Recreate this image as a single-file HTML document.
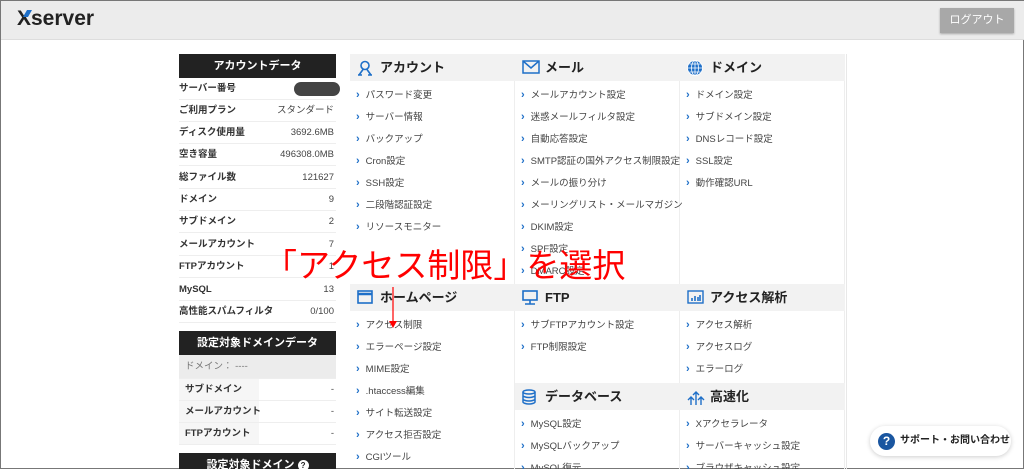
<!DOCTYPE html>
<html><head><meta charset="utf-8"><style>
*{margin:0;padding:0;box-sizing:border-box}
html,body{overflow:hidden}
body{width:1024px;height:469px;overflow:hidden;background:#fff;font-family:"Liberation Sans","Noto Sans CJK JP",sans-serif;color:#333;position:relative;border:1px solid #777;}
.hdr{position:absolute;left:0;top:0;width:1024px;height:39px;background:#ececec;border-bottom:1px solid #ddd}
.logo{position:absolute;left:16px;top:6px;font-size:21px;font-weight:bold;color:#222;letter-spacing:0}
.logo i{position:absolute;left:8px;top:3px;width:5px;height:7px;background:#1e6fc8;transform:skewX(-30deg)}
.out{position:absolute;left:939px;top:7px;width:74px;height:25px;background:#a8a8a8;color:#fff;font-size:11px;text-align:center;line-height:25px;box-shadow:0 1px 2px rgba(0,0,0,.3)}
.bh{position:absolute;left:178px;width:157px;height:24px;background:#222;color:#fff;font-size:11px;font-weight:bold;text-align:center;line-height:24px}
.r{position:absolute;left:178px;width:157px;height:22px;border-bottom:1px solid #eee;font-size:9.5px;line-height:22px}
.r b{font-weight:bold;color:#333}
.r span{position:absolute;right:2px;top:0;color:#444}
.grid{position:absolute;left:349px;top:53px;width:497px;height:420px;border-right:1px solid #e8e8e8}
.col{position:absolute;top:0;width:165px;height:420px;border-right:1px solid #eee}
.h{position:absolute;left:0;width:165px;height:27px;background:#f2f2f2;font-size:13px;font-weight:bold;line-height:27px;padding-left:30px;color:#222}
.h svg{position:absolute;left:7px;top:6px}
.it{position:absolute;left:6px;font-size:9.5px;color:#444;white-space:nowrap}
.it:before{content:"›";color:#1e6fc8;font-weight:bold;margin-right:6px;font-size:11px}
.ann{position:absolute;left:263px;top:238px;font-size:33px;color:#f00;white-space:nowrap;letter-spacing:0}
.sup{position:absolute;left:869px;top:425px;width:141px;height:30px;background:#fff;border-radius:15px;box-shadow:0 1px 5px rgba(0,0,0,.2);font-size:10px;font-weight:bold;line-height:30px;padding-left:30px;color:#222}
.sup i{position:absolute;left:8px;top:7px;width:17px;height:17px;border-radius:50%;background:#1a56a0;color:#fff;font-style:normal;text-align:center;line-height:17px;font-size:12px}
</style></head><body>
<div class="hdr"><div class="logo"><i></i>Xserver</div><div class="out">ログアウト</div></div>

<div class="bh" style="top:53px">アカウントデータ</div>
<div class="r" style="top:77px"><b>サーバー番号</b><span style="right:-4px;top:4px;width:46px;height:14px;border-radius:7px;background:#444"></span></div>
<div class="r" style="top:99px"><b>ご利用プラン</b><span>スタンダード</span></div>
<div class="r" style="top:121px"><b>ディスク使用量</b><span>3692.6MB</span></div>
<div class="r" style="top:143px"><b>空き容量</b><span>496308.0MB</span></div>
<div class="r" style="top:166px"><b>総ファイル数</b><span>121627</span></div>
<div class="r" style="top:188px"><b>ドメイン</b><span>9</span></div>
<div class="r" style="top:210px"><b>サブドメイン</b><span>2</span></div>
<div class="r" style="top:233px"><b>メールアカウント</b><span>7</span></div>
<div class="r" style="top:255px"><b>FTPアカウント</b><span>1</span></div>
<div class="r" style="top:278px"><b>MySQL</b><span>13</span></div>
<div class="r" style="top:300px"><b>高性能スパムフィルタ</b><span>0/100</span></div>
<div class="bh" style="top:330px">設定対象ドメインデータ</div>
<div class="r" style="top:354px;background:#ececec;color:#777;padding-left:6px;height:24px;line-height:24px">ドメイン： ----</div>
<div class="r" style="top:378px;padding-left:6px;background:linear-gradient(90deg,#f6f6f6 80px,#fff 80px)"><b>サブドメイン</b><span>-</span></div>
<div class="r" style="top:400px;padding-left:6px;background:linear-gradient(90deg,#f6f6f6 80px,#fff 80px)"><b>メールアカウント</b><span>-</span></div>
<div class="r" style="top:422px;padding-left:6px;background:linear-gradient(90deg,#f6f6f6 80px,#fff 80px)"><b>FTPアカウント</b><span>-</span></div>
<div class="bh" style="top:452px">設定対象ドメイン <span style="display:inline-block;width:11px;height:11px;border-radius:50%;background:#fff;color:#222;font-size:8px;line-height:11px">?</span></div>

<div class="grid">
<div class="col" style="left:0">
<div class="h" style="top:0"><svg width="16" height="16" viewBox="0 0 16 16" fill="none" stroke="#1e6fc8" stroke-width="1.6"><circle cx="8" cy="5.5" r="4"/><path d="M6 9.5L2 15M10 9.5L14 15M1 15h4M11 15h4"/></svg>アカウント</div>
<div class="it" style="top:33px">パスワード変更</div>
<div class="it" style="top:55px">サーバー情報</div>
<div class="it" style="top:77px">バックアップ</div>
<div class="it" style="top:99px">Cron設定</div>
<div class="it" style="top:121px">SSH設定</div>
<div class="it" style="top:143px">二段階認証設定</div>
<div class="it" style="top:165px">リソースモニター</div>
<div class="h" style="top:230px"><svg width="16" height="14" viewBox="0 0 16 14" fill="none" stroke="#1e6fc8" stroke-width="1.6"><rect x="1" y="1" width="14" height="12"/><path d="M1 4h14" stroke-width="2.5"/></svg>ホームページ</div>
<div class="it" style="top:263px">アクセス制限</div>
<div class="it" style="top:285px">エラーページ設定</div>
<div class="it" style="top:307px">MIME設定</div>
<div class="it" style="top:329px">.htaccess編集</div>
<div class="it" style="top:351px">サイト転送設定</div>
<div class="it" style="top:373px">アクセス拒否設定</div>
<div class="it" style="top:395px">CGIツール</div>
</div>
<div class="col" style="left:165px">
<div class="h" style="top:0"><svg width="18" height="14" viewBox="0 0 18 14" fill="none" stroke="#1e6fc8" stroke-width="1.5"><rect x="1" y="1" width="16" height="12"/><path d="M1 1l8 7 8-7"/></svg>メール</div>
<div class="it" style="top:33px">メールアカウント設定</div>
<div class="it" style="top:55px">迷惑メールフィルタ設定</div>
<div class="it" style="top:77px">自動応答設定</div>
<div class="it" style="top:99px">SMTP認証の国外アクセス制限設定</div>
<div class="it" style="top:121px">メールの振り分け</div>
<div class="it" style="top:143px">メーリングリスト・メールマガジン</div>
<div class="it" style="top:165px">DKIM設定</div>
<div class="it" style="top:187px">SPF設定</div>
<div class="it" style="top:209px">DMARC設定</div>
<div class="h" style="top:230px"><svg width="16" height="16" viewBox="0 0 16 16" fill="none" stroke="#1e6fc8" stroke-width="1.6"><rect x="1" y="1" width="14" height="9"/><path d="M8 10v4M3 14h10"/></svg>FTP</div>
<div class="it" style="top:263px">サブFTPアカウント設定</div>
<div class="it" style="top:285px">FTP制限設定</div>
<div class="h" style="top:329px"><svg width="14" height="16" viewBox="0 0 14 16" fill="none" stroke="#1e6fc8" stroke-width="1.5"><ellipse cx="7" cy="3" rx="6" ry="2"/><path d="M1 3v10c0 1 3 2 6 2s6-1 6-2V3M1 6.5c0 1 3 2 6 2s6-1 6-2M1 10c0 1 3 2 6 2s6-1 6-2"/></svg>データベース</div>
<div class="it" style="top:362px">MySQL設定</div>
<div class="it" style="top:384px">MySQLバックアップ</div>
<div class="it" style="top:406px">MySQL復元</div>
</div>
<div class="col" style="left:330px">
<div class="h" style="top:0"><svg width="16" height="16" viewBox="0 0 16 16" fill="#1e6fc8" stroke="#fff" stroke-width=".8"><circle cx="8" cy="8" r="7.5"/><path d="M1 8h14M8 .5v15M2.5 4h11M2.5 12h11" fill="none"/><ellipse cx="8" cy="8" rx="3.5" ry="7.5" fill="none"/></svg>ドメイン</div>
<div class="it" style="top:33px">ドメイン設定</div>
<div class="it" style="top:55px">サブドメイン設定</div>
<div class="it" style="top:77px">DNSレコード設定</div>
<div class="it" style="top:99px">SSL設定</div>
<div class="it" style="top:121px">動作確認URL</div>
<div class="h" style="top:230px"><svg width="17" height="14" viewBox="0 0 17 14" fill="none" stroke="#1e6fc8" stroke-width="1.4"><rect x="1" y="1" width="15" height="12"/><path d="M5 11V8M8 11V6M11 11V7M13 11V5" stroke-width="1.6"/></svg>アクセス解析</div>
<div class="it" style="top:263px">アクセス解析</div>
<div class="it" style="top:285px">アクセスログ</div>
<div class="it" style="top:307px">エラーログ</div>
<div class="h" style="top:329px"><svg width="18" height="17" viewBox="0 0 18 17" fill="none" stroke="#1e6fc8" stroke-width="1.4"><path d="M9 16V4M6 6l3-3 3 3M4 16V9M1 11l3-3 3 3M14 16V9M11 11l3-3 3 3"/></svg>高速化</div>
<div class="it" style="top:362px">Xアクセラレータ</div>
<div class="it" style="top:384px">サーバーキャッシュ設定</div>
<div class="it" style="top:406px">ブラウザキャッシュ設定</div>
</div>
</div>

<div class="ann">「アクセス制限」を選択</div>
<svg style="position:absolute;left:386px;top:286px" width="12" height="44"><path d="M6 0v38" stroke="#f00" stroke-width="1.2"/><path d="M2 34l4 7 4-7z" fill="#f00"/></svg>
<div class="sup"><i>?</i>サポート・お問い合わせ</div>
</body></html>
